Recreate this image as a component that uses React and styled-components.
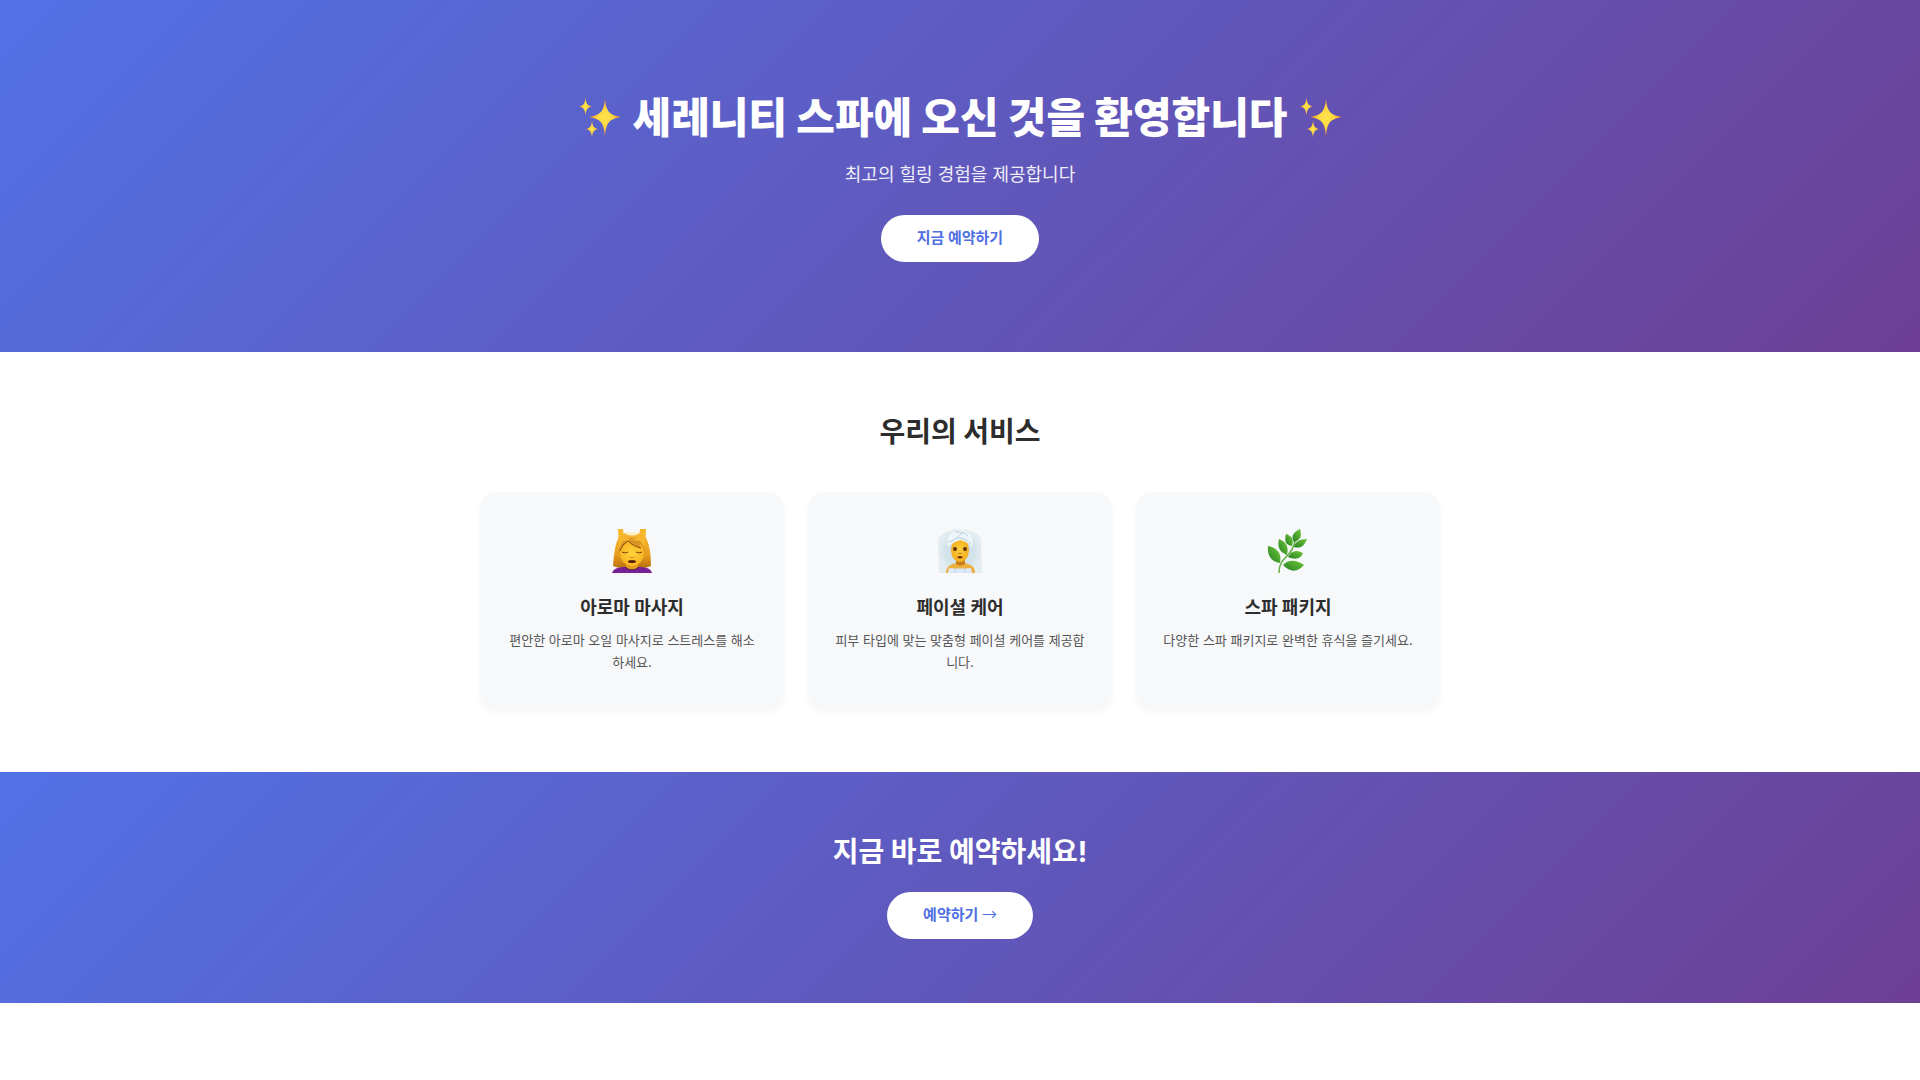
import React from "react";
import { styled, createGlobalStyle } from "styled-components";

const GlobalStyle = createGlobalStyle`
  * {
    margin: 0;
    padding: 0;
    box-sizing: border-box;
  }
  body {
    background: #fff;
    color: #2d2d2d;
    font-family: "Inter", "Noto Sans CJK KR", sans-serif;
  }
`;

const Banner = styled.section`
  padding: ${(props) => (props.$large ? "90px 20px" : "64px 20px")};
  display: flex;
  flex-direction: column;
  align-items: center;
  text-align: center;
  color: #fff;
  background: linear-gradient(135deg, #5272e6 0%, #6d3f94 100%);
`;

const HeroTitle = styled.h1`
  display: flex;
  align-items: center;
  gap: 12px;
  font-size: 42px;
  font-weight: 800;
  line-height: 56px;
  margin-bottom: 15px;
`;

const HeroText = styled.p`
  font-size: 18px;
  line-height: 28px;
  margin-bottom: 26px;
  opacity: 0.9;
`;

const SectionTitle = styled.h2`
  font-size: 28px;
  font-weight: 700;
  line-height: 32px;
  text-align: center;
  margin-bottom: ${(props) => (props.$gap ? props.$gap : "24px")};
`;

const BookButton = styled.button`
  padding: 11px 36px 13px;
  border: none;
  border-radius: 50px;
  background: #fff;
  color: #4f6fe3;
  font-family: inherit;
  font-size: 15px;
  font-weight: 700;
  line-height: 23px;
  cursor: pointer;
`;

const Arrow = styled.span`
  font-family: "Noto Sans CJK KR", sans-serif;
  font-weight: 400;
  line-height: 1;
`;

const Services = styled.section`
  max-width: 1000px;
  margin: 0 auto;
  padding: 64px 20px;
`;

const ServiceList = styled.div`
  display: grid;
  grid-template-columns: repeat(3, 1fr);
  gap: 24px;
`;

const Card = styled.article`
  padding: 37px 26px 35px;
  border-radius: 16px;
  background: #f7f8fa;
  box-shadow: 0 4px 6px rgba(0, 0, 0, 0.04);
  text-align: center;
`;

const CardIcon = styled.svg`
  display: block;
  width: 44px;
  height: 44px;
  margin: 0 auto 22px;
`;

const CardTitle = styled.h3`
  font-size: 18px;
  font-weight: 700;
  line-height: 26px;
  margin-bottom: 8px;
`;

const CardText = styled.p`
  color: #555;
  font-size: 13px;
  line-height: 22px;
`;

const SparkleIcon = styled.svg`
  width: 42px;
  height: 42px;
`;

function Sparkles({ id }) {
  return (
    <SparkleIcon viewBox="0 0 42 42" aria-hidden="true">
      <defs>
        <radialGradient id={id}>
          <stop offset="0" stopColor="#ffe34d" />
          <stop offset="0.5" stopColor="#fed640" />
          <stop offset="1" stopColor="#e87d2c" />
        </radialGradient>
      </defs>
      <g fill={`url(#${id})`}>
        <path d="M26 1C27 13 29 18 42 20C29 22 27 27 26 40C25 27 23 22 10 20C23 18 25 13 26 1Z" />
        <path d="M6.500 0C7 6 8 8.500 13 9.500C8 10.500 7 13 6.500 19C6 13 5 10.500 0 9.500C5 8.500 6 6 6.500 0Z" />
        <path d="M13 23C13.500 29 14.500 31 19 32C14.500 33 13.500 35 13 41C12.500 35 11.500 33 7 32C11.500 31 12.500 29 13 23Z" />
      </g>
    </SparkleIcon>
  );
}

function MassageIcon() {
  return (
    <CardIcon viewBox="0 0 44 44" aria-hidden="true">
      <defs>
        <linearGradient id="massageHair" x2="0" y2="1">
          <stop offset="0" stopColor="#f4b52f" />
          <stop offset="0.6" stopColor="#e9a01f" />
          <stop offset="1" stopColor="#b9700c" />
        </linearGradient>
        <radialGradient id="massageFace">
          <stop offset="0" stopColor="#ffd43a" />
          <stop offset="1" stopColor="#f9b522" />
        </radialGradient>
      </defs>
      <path d="M9 8C12 2 32 2 36 9C40 17 41 27 41 37Q34 40 22 39Q10 40 3 37C4 25 5 15 9 8Z" fill="url(#massageHair)" />
      <path d="M2 44C3 40 8 38 15 38H29C37 38 41 40 42 44Z" fill="#782194" />
      <path d="M16 33H28V39Q22 43 16 39Z" fill="#e69a1a" />
      <path d="M15 38Q22 44 29 38" fill="none" stroke="#4d1260" strokeWidth="1" />
      <ellipse cx="22" cy="24" rx="12" ry="13" fill="url(#massageFace)" />
      <path d="M9 24C8 14 14 9 22 9C31 9 36 14 35 24C34 20 32 16 29 14L31 19C26 18 21 15 18 12C14 15 11 18 9 24Z" fill="#d99322" />
      <path d="M18 12C22 16 26 18 31 19M18 12Q12 15 10 22" fill="none" stroke="#8a5310" strokeWidth="1" />
      <path d="M8 0H13L14 8L21 11L13 12L9 19Z" fill="#f6b72c" />
      <path d="M36 0H30L29 8L22 11L30 12L35 19Z" fill="#f6b72c" />
      <path d="M15 5Q22 0 29 5Q22 8 15 5Z" fill="#fff0c8" />
      <path d="M12 23Q15 25 18 23M26 23Q29 25 32 23" fill="none" stroke="#76430e" strokeWidth="1" />
      <path d="M20 28Q22 30 24 28" fill="none" stroke="#d18410" strokeWidth="1" />
      <ellipse cx="22" cy="32.500" rx="4" ry="1.500" fill="#5a1f0c" />
    </CardIcon>
  );
}

function FacialIcon() {
  return (
    <CardIcon viewBox="0 0 44 44" aria-hidden="true">
      <defs>
        <radialGradient id="facialSteam">
          <stop offset="0" stopColor="#c6d9e2" />
          <stop offset="0.7" stopColor="#d5e4ea" />
          <stop offset="1" stopColor="#e4eef2" />
        </radialGradient>
        <radialGradient id="facialFace">
          <stop offset="0" stopColor="#ffd13c" />
          <stop offset="1" stopColor="#f4ae22" />
        </radialGradient>
      </defs>
      <path d="M1 44L0 10Q4 1 22 0Q40 1 43 10L44 44Z" fill="url(#facialSteam)" />
      <path d="M8 44C8 38 11 36 18 34H27C34 36 37 38 37 44Z" fill="#e9b040" />
      <path d="M18 28H27V35Q22 38 18 35Z" fill="#c97c1c" />
      <ellipse cx="22" cy="21" rx="9" ry="12" fill="url(#facialFace)" />
      <path d="M10 18C7 10 12 1 22 1C32 1 37 9 34 18C32 14 27 13 23 11C18 12 14 14 10 18Z" fill="#edf5f9" />
      <path d="M10 13C15 12 20 9 24 4M20 9Q28 9 33 15M17 3Q26 2 30 7" fill="none" stroke="#b9ccd8" strokeWidth="1" />
      <circle cx="17" cy="20" r="2" fill="#5d3510" />
      <circle cx="27" cy="20" r="2" fill="#5d3510" />
      <path d="M20 24Q22 25 24 24" fill="none" stroke="#c77d16" strokeWidth="1" />
      <path d="M19 28Q22 26 25 28Q22 31 19 28Z" fill="#743011" />
      <path d="M11 39Q22 40 33 39L34 44H10Z" fill="#dce8f3" />
      <path d="M17 40V44M27 40V44" stroke="#bfd0df" strokeWidth="1" />
    </CardIcon>
  );
}

function HerbIcon() {
  return (
    <CardIcon viewBox="0 0 44 44" aria-hidden="true">
      <defs>
        <linearGradient id="herbLeaf" x1="1" x2="0" y2="1">
          <stop offset="0" stopColor="#73c837" />
          <stop offset="1" stopColor="#238025" />
        </linearGradient>
      </defs>
      <path d="M13 44C13 35 16 32 21 27C26 22 28 17 29 12" fill="none" stroke="#62ac45" strokeWidth="1.500" />
      <g fill="url(#herbLeaf)">
        <path d="M34 0C26 4 25 8 28 13C35 11 36 7 34 0Z" />
        <path d="M41 10C33 10 29 13 28 18C35 20 38 17 41 10Z" />
        <path d="M20 5C18 13 20 16 26 17C28 11 26 7 20 5Z" />
        <path d="M13 10C11 19 14 23 21 26C23 17 20 13 13 10Z" />
        <path d="M2 17C1 27 5 32 14 34C16 24 11 19 2 17Z" />
        <path d="M37 24C30 20 25 22 22 28C29 31 35 30 37 24Z" />
        <path d="M38 36C29 30 22 31 17 36C24 43 31 44 38 36Z" />
      </g>
    </CardIcon>
  );
}

const services = [
  {
    id: 1,
    icon: <MassageIcon />,
    title: "아로마 마사지",
    text: "편안한 아로마 오일 마사지로 스트레스를 해소하세요.",
  },
  {
    id: 2,
    icon: <FacialIcon />,
    title: "페이셜 케어",
    text: "피부 타입에 맞는 맞춤형 페이셜 케어를 제공합니다.",
  },
  {
    id: 3,
    icon: <HerbIcon />,
    title: "스파 패키지",
    text: "다양한 스파 패키지로 완벽한 휴식을 즐기세요.",
  },
];

function App() {
  return (
    <main>
      <GlobalStyle />
      <Banner $large>
        <HeroTitle>
          <Sparkles id="sparkleLeft" />
          세레니티 스파에 오신 것을 환영합니다
          <Sparkles id="sparkleRight" />
        </HeroTitle>
        <HeroText>최고의 힐링 경험을 제공합니다</HeroText>
        <BookButton type="button">지금 예약하기</BookButton>
      </Banner>
      <Services>
        <SectionTitle $gap="44px">우리의 서비스</SectionTitle>
        <ServiceList>
          {services.map((service) => (
            <Card key={service.id}>
              {service.icon}
              <CardTitle>{service.title}</CardTitle>
              <CardText>{service.text}</CardText>
            </Card>
          ))}
        </ServiceList>
      </Services>
      <Banner>
        <SectionTitle>지금 바로 예약하세요!</SectionTitle>
        <BookButton type="button">
          예약하기 <Arrow>→</Arrow>
        </BookButton>
      </Banner>
    </main>
  );
}
export default App;
